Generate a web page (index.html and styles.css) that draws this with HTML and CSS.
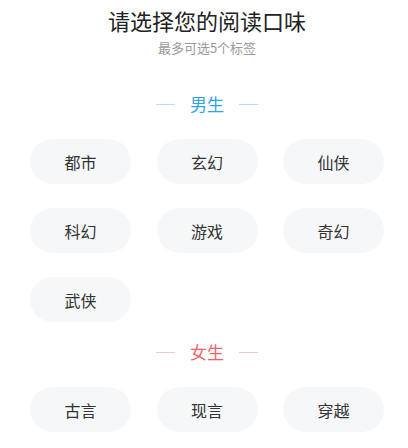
FILE: index.html
```html
<!DOCTYPE html>
<html lang="zh-CN">
<head>
<meta charset="utf-8">
<link rel="stylesheet" href="styles.css">
</head>
<body>
<div class="page">
  <h1 class="title">请选择您的阅读口味</h1>
  <p class="subtitle">最多可选5个标签</p>

  <div class="section-head male">
    <span class="line"></span><span class="label">男生</span><span class="line"></span>
  </div>
  <div class="tags">
    <div class="tag">都市</div>
    <div class="tag">玄幻</div>
    <div class="tag">仙侠</div>
    <div class="tag">科幻</div>
    <div class="tag">游戏</div>
    <div class="tag">奇幻</div>
    <div class="tag">武侠</div>
  </div>

  <div class="section-head female">
    <span class="line"></span><span class="label">女生</span><span class="line"></span>
  </div>
  <div class="tags">
    <div class="tag">古言</div>
    <div class="tag">现言</div>
    <div class="tag">穿越</div>
  </div>
</div>
</body>
</html>
```
FILE: styles.css
```css
html, body {
  margin: 0;
  padding: 0;
  background: #ffffff;
}
body {
  font-family: "Noto Sans CJK SC", "Noto Sans", sans-serif;
  overflow: hidden;
}
.page {
  width: 408px;
  height: 448px;
  box-sizing: border-box;
  padding: 0 24px 0 30px;
}
.title {
  margin: 5px 0 0;
  font-size: 22px;
  line-height: 30px;
  font-weight: 400;
  color: #222222;
  text-align: center;
}
.subtitle {
  margin: 4px 0 0;
  font-size: 13px;
  line-height: 18px;
  color: #999999;
  text-align: center;
}
.section-head {
  display: flex;
  align-items: center;
  justify-content: center;
  gap: 15px;
  height: 24px;
  margin: 35px 0 23px;
}
.section-head.female {
  margin-top: 18px;
}
.section-head .label {
  font-size: 17px;
  line-height: 24px;
}
.section-head .line {
  width: 19px;
  height: 1px;
}
.male .label { color: #2fa3e6; }
.male .line { background: #b8def5; }
.female .label { color: #f2625f; }
.female .line { background: #f8c6c4; }
.tags {
  display: grid;
  grid-template-columns: repeat(3, 101px);
  column-gap: 25.5px;
  row-gap: 24px;
}
.tag {
  height: 45px;
  border-radius: 23px;
  background: #f6f7f9;
  color: #333333;
  font-size: 16px;
  display: flex;
  align-items: center;
  justify-content: center;
}
```
